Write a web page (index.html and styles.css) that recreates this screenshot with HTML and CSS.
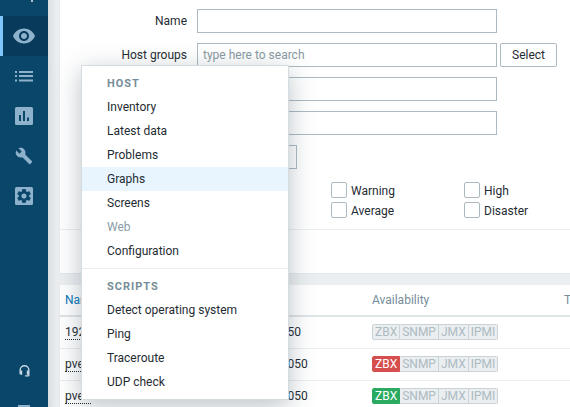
FILE: index.html
```html
<!DOCTYPE html>
<html lang="en">
<head>
<meta charset="utf-8">
<title>Hosts</title>
<link rel="stylesheet" href="styles.css">
</head>
<body>
<aside class="sidebar">
  <div class="logo-stub"><span class="logo-tick"></span></div>
  <nav class="nav">
    <a class="nav-item is-active">
      <svg class="icon-eye" viewBox="0 0 24 24"><path d="M12 4.500C7 4.500 2.730 7.610 1 12c1.730 4.390 6 7.500 11 7.500s9.270-3.110 11-7.500c-1.730-4.390-6-7.500-11-7.500zM12 17c-2.760 0-5-2.240-5-5s2.240-5 5-5 5 2.240 5 5-2.240 5-5 5zm0-8c-1.660 0-3 1.340-3 3s1.340 3 3 3 3-1.340 3-3-1.340-3-3-3z"/></svg>
    </a>
    <a class="nav-item">
      <svg class="icon" viewBox="0 0 18 18"><path d="M0 4h2v2H0zM4 4h14v2H4zM0 8h2v2H0zM4 8h14v2H4zM0 12.500h2v2H0zM4 12.500h14v2H4z"/></svg>
    </a>
    <a class="nav-item">
      <svg class="icon" viewBox="0 0 18 18"><path fill-rule="evenodd" d="M1.500 0h15A1.500 1.500 0 0 1 18 1.500v15a1.500 1.500 0 0 1-1.500 1.500h-15A1.500 1.500 0 0 1 0 16.500v-15A1.500 1.500 0 0 1 1.500 0zM4 8v6h2V8zM8 4v10h2V4zM12 10.500V14h2v-3.500z"/></svg>
    </a>
    <a class="nav-item">
      <svg class="icon" viewBox="0 0 24 24"><path d="M22.700 19l-9.100-9.100c.9-2.300.4-5-1.500-6.900-2-2-5-2.400-7.400-1.300L9 6 6 9 1.600 4.700C.4 7.100.9 10.100 2.900 12.100c1.900 1.900 4.600 2.400 6.900 1.500l9.100 9.100c.4.4 1 .4 1.400 0l2.300-2.300c.5-.4.500-1.100.100-1.400z"/></svg>
    </a>
    <a class="nav-item">
      <svg class="icon" viewBox="0 0 18 18"><path d="M1.500 0h15A1.500 1.500 0 0 1 18 1.500v15a1.500 1.500 0 0 1-1.500 1.500h-15A1.500 1.500 0 0 1 0 16.500v-15A1.500 1.500 0 0 1 1.500 0z"/><g transform="translate(.36 .36) scale(.72)"><path class="gear" d="M19.140 12.940c.04-.3.06-.61.06-.94 0-.32-.02-.64-.07-.94l2.030-1.580c.18-.14.23-.41.12-.61l-1.920-3.320c-.12-.22-.37-.29-.59-.22l-2.390.96c-.5-.38-1.030-.7-1.620-.94l-.36-2.540c-.04-.24-.24-.41-.48-.41h-3.840c-.24 0-.43.17-.47.41l-.36 2.540c-.59.24-1.130.57-1.620.94l-2.390-.96c-.22-.08-.47 0-.59.22L2.740 8.870c-.12.21-.08.47.12.61l2.030 1.580c-.05.3-.09.63-.09.94s.02.64.07.94l-2.030 1.580c-.18.14-.23.41-.12.61l1.920 3.320c.12.22.37.29.59.22l2.390-.96c.5.38 1.030.7 1.620.94l.36 2.540c.05.24.24.41.48.41h3.840c.24 0 .44-.17.47-.41l.36-2.540c.59-.24 1.130-.56 1.620-.94l2.390.96c.22.08.47 0 .59-.22l1.920-3.320c.12-.22.07-.47-.12-.61l-2.010-1.580zM12 15.600c-1.980 0-3.600-1.620-3.600-3.600s1.620-3.600 3.600-3.600 3.600 1.620 3.600 3.600-1.620 3.600-3.600 3.600z"/></g></svg>
    </a>
  </nav>
  <div class="nav-bottom">
    <a class="nav-item">
      <svg class="icon-head" viewBox="0 0 12 14"><path d="M6 0a5.500 5.500 0 0 0-5.500 5.500V9A1.500 1.500 0 0 0 2 10.500h1.500V6H2v-.5a4 4 0 0 1 8 0V6H8.500v4.500H10v.5H6.500v1.500H10A1.500 1.500 0 0 0 11.500 11V5.500A5.500 5.500 0 0 0 6 0z"/></svg>
    </a>
    <a class="nav-item">
      <span class="stub-user"></span>
    </a>
  </div>
</aside>

<main class="content">
  <section class="panel filter">
    <div class="form">
      <label class="label">Name</label>
      <div class="field"><input class="input" type="text"></div>
      <label class="label">Host groups</label>
      <div class="field">
        <input class="input" type="text" placeholder="type here to search">
        <button class="btn" type="button">Select</button>
      </div>
      <label class="label">IP</label>
      <div class="field"><input class="input" type="text"></div>
      <label class="label">DNS</label>
      <div class="field"><input class="input" type="text"></div>
      <label class="label">Port</label>
      <div class="field"><input class="input input-short" type="text"></div>
    </div>
    <div class="severity">
      <label class="check"><span class="box"></span><span class="check-text">Warning</span></label>
      <label class="check"><span class="box"></span><span class="check-text">High</span></label>
      <label class="check"><span class="box"></span><span class="check-text">Average</span></label>
      <label class="check"><span class="box"></span><span class="check-text">Disaster</span></label>
    </div>
    <div class="filter-foot"></div>
  </section>

  <section class="panel results">
    <table class="table">
      <thead>
        <tr>
          <th class="col-name"><a class="sort">Name</a></th>
          <th class="col-iface">Interface</th>
          <th class="col-avail">Availability</th>
          <th>Tags</th>
        </tr>
      </thead>
      <tbody>
        <tr>
          <td><a class="host">192.168.1.1</a></td>
          <td>192.168.1.1: 10050</td>
          <td><span class="avail"><span class="tag">ZBX</span><span class="tag">SNMP</span><span class="tag">JMX</span><span class="tag">IPMI</span></span></td>
          <td></td>
        </tr>
        <tr>
          <td><a class="host">pve1</a></td>
          <td>192.168.1.21: 10050</td>
          <td><span class="avail"><span class="tag tag-red">ZBX</span><span class="tag">SNMP</span><span class="tag">JMX</span><span class="tag">IPMI</span></span></td>
          <td></td>
        </tr>
        <tr>
          <td><a class="host">pve2</a></td>
          <td>192.168.1.22: 10050</td>
          <td><span class="avail"><span class="tag tag-green">ZBX</span><span class="tag">SNMP</span><span class="tag">JMX</span><span class="tag">IPMI</span></span></td>
          <td></td>
        </tr>
      </tbody>
    </table>
  </section>
</main>

<ul class="menu">
  <li class="menu-head">HOST</li>
  <li class="menu-item">Inventory</li>
  <li class="menu-item">Latest data</li>
  <li class="menu-item">Problems</li>
  <li class="menu-item is-hover">Graphs</li>
  <li class="menu-item">Screens</li>
  <li class="menu-item is-disabled">Web</li>
  <li class="menu-item">Configuration</li>
  <li class="menu-sep"></li>
  <li class="menu-head">SCRIPTS</li>
  <li class="menu-item">Detect operating system</li>
  <li class="menu-item">Ping</li>
  <li class="menu-item">Traceroute</li>
  <li class="menu-item">UDP check</li>
</ul>
</body>
</html>
```

FILE: styles.css
```css
* { box-sizing: border-box; }
html, body { margin: 0; padding: 0; }
body {
  width: 570px;
  height: 407px;
  overflow: hidden;
  display: flex;
  background: #ebeef0;
  font-family: Roboto, "Liberation Sans", sans-serif;
  font-size: 12px;
  color: #1f2c33;
}

/* Sidebar */
.sidebar {
  flex: 0 0 48px;
  height: 407px;
  overflow: hidden;
  display: flex;
  flex-direction: column;
  background: #0a466a;
}
.logo-stub { flex: 0 0 16px; display: flex; justify-content: center; }
.logo-tick { width: 2px; height: 2px; margin-left: 15px; background: #a9c2d3; }
.nav-item {
  height: 40px;
  display: flex;
  align-items: center;
  justify-content: center;
  border-left: 3px solid transparent;
  border-right: 3px solid transparent;
}
.nav-item svg { fill: #8fb2cc; display: block; }
.nav-item.is-active { background: #083b5b; border-left-color: #7ec6fb; }
.icon { width: 18px; height: 18px; }
.icon-eye { width: 24px; height: 24px; }
.icon-head { width: 11px; height: 13px; }
.nav-item .icon-head { fill: #c6d7e2; }
.nav-item .gear { fill: #0a466a; }
.nav-bottom { margin-top: auto; margin-bottom: -24px; }
.stub-user { width: 12px; height: 12px; background: #8fb2cc; }

/* Content */
.content {
  flex: 1;
  padding: 0 0 0 11px;
  min-width: 0;
  display: flex;
  flex-direction: column;
  gap: 11px;
  background: linear-gradient(90deg, #d9dee2 0, #eceff1 9px);
}
.panel { background: #fff; box-shadow: inset 1px 0 0 #e8ebed; }
.filter { height: 274px; padding-top: 9px; border-bottom: 1px solid #e4e8eb; flex: none; }
.form {
  display: grid;
  grid-template-columns: 128px 1fr;
  column-gap: 10px;
  row-gap: 10px;
  align-items: center;
}
.label { text-align: right; line-height: 24px; }
.field { display: flex; gap: 3px; }
.input {
  width: 300px;
  height: 24px;
  padding: 0 5px;
  border: 1px solid #acbbc2;
  background: #fff;
  font: inherit;
  color: #1f2c33;
  outline: none;
  border-radius: 0;
}
.input::placeholder { color: #8a9aa3; opacity: 1; }
.input-short { width: 100px; }
.btn {
  height: 24px;
  width: 57px;
  padding: 0;
  border: 1px solid #acbbc2;
  border-radius: 2px;
  background: #fff;
  color: #1f2c33;
  font: inherit;
}
.severity {
  display: grid;
  grid-template-columns: 133px auto;
  row-gap: 4px;
  margin: 13px 0 0 272px;
}
.check { display: flex; align-items: center; gap: 4px; height: 16px; color: #1f2c33; }
.check-text { margin-top: 2px; }
.box {
  width: 16px;
  height: 16px;
  border: 1px solid #acbbc2;
  border-radius: 2px;
  background: #fff;
}
.filter-foot { margin-top: 11px; border-top: 1px solid #ebeef0; }

.results { flex: 1; overflow: hidden; }
.table { border-collapse: collapse; table-layout: fixed; width: 560px; }
.table th {
  height: 31px;
  padding: 0 6px;
  text-align: left;
  font-weight: 400;
  color: #768d99;
  border-bottom: 2px solid #dfe4e7;
}
.table td {
  height: 32px;
  padding: 0 6px;
  border-bottom: 1px solid #ebeef0;
  white-space: nowrap;
  overflow: hidden;
}
.col-name { width: 133px; }
.col-iface { width: 174px; }
.col-avail { width: 192px; }
.sort { color: #0275b8; }
.host { color: #1f2c33; border-bottom: 1px dotted #1f2c33; }
.avail { display: inline-flex; vertical-align: middle; }
.tag {
  height: 16px;
  padding: 0 2px;
  line-height: 14px;
  background: #ebeef0;
  border: 1px solid #cad3d8;
  border-left: none;
  color: #acbbc2;
}
.tag:first-child { border-left: 1px solid #cad3d8; border-radius: 2px 0 0 2px; }
.tag:last-child { border-radius: 0 2px 2px 0; }
.tag-red { background: #d64e4e; border-color: #d64e4e !important; color: #fff; }
.tag-green { background: #2bab62; border-color: #2bab62 !important; color: #fff; }

/* Context menu */
.menu {
  position: absolute;
  left: 81px;
  top: 65px;
  width: 208px;
  height: 335px;
  margin: 0;
  padding: 5px 0 0;
  list-style: none;
  background: #fff;
  border: 1px solid #d4dce0;
  box-shadow: 0 6px 24px rgba(60, 80, 95, .35);
}
.menu-head {
  height: 24px;
  line-height: 26px;
  padding-left: 25px;
  font-size: 11px;
  font-weight: 700;
  letter-spacing: 1px;
  color: #768d99;
}
.menu-item { height: 24px; line-height: 24px; padding-left: 25px; }
.is-hover { background: #e8f5ff; }
.is-disabled { color: #8b9ca6; }
.menu-sep { margin: 5px 0; border-top: 1px solid #ebeef0; }
```
